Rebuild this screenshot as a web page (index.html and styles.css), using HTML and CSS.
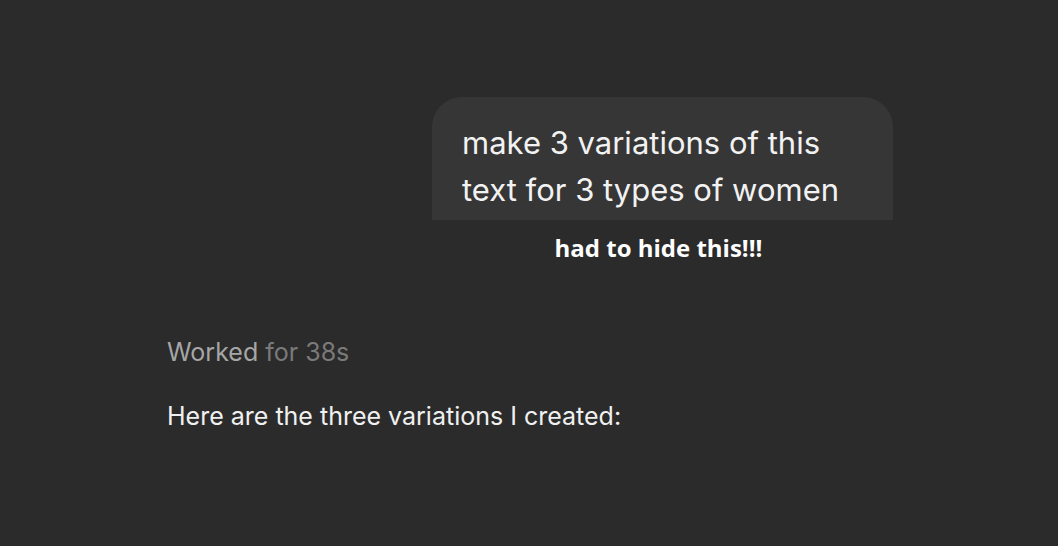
FILE: index.html
```html
<!DOCTYPE html>
<html>
<head>
<meta charset="utf-8">
<link rel="stylesheet" href="styles.css">
</head>
<body>
<div class="page">
  <div class="user-row">
    <div class="user-col">
      <div class="bubble">make 3 variations of this<br>text for 3 types of women</div>
      <div class="note">had to hide this!!!</div>
    </div>
  </div>
  <div class="assistant">
    <div class="worked"><span class="w1">Worked</span> <span class="w2">for 38s</span></div>
    <div class="reply">Here are the three variations I created:</div>
  </div>
</div>
</body>
</html>
```
FILE: styles.css
```css
html, body {
  margin: 0;
  padding: 0;
  background: #2b2b2b;
}
body {
  width: 1058px;
  height: 546px;
  overflow: hidden;
  font-family: Inter, "Liberation Sans", sans-serif;
}
.page {
  display: flex;
  flex-direction: column;
  padding-top: 97px;
}
.user-row {
  display: flex;
  justify-content: flex-start;
  padding-left: 432px;
}
.user-col {
  display: flex;
  flex-direction: column;
  width: 461px;
}
.bubble {
  background: #363636;
  border-radius: 30px 30px 0 0;
  color: #f2f2f2;
  font-size: 31px;
  line-height: 47px;
  padding: 22px 30px 0 30px;
  box-sizing: border-box;
  height: 123px;
  white-space: nowrap;
}
.note {
  font-family: "Open Sans", sans-serif;
  font-weight: 700;
  font-size: 24px;
  color: #ffffff;
  text-align: center;
  margin-top: 12px;
  line-height: 32px;
  padding-right: 8px;
}
.assistant {
  padding-left: 167px;
  margin-top: 73px;
}
.worked {
  font-size: 25px;
  line-height: 30px;
}
.w1 { color: #a6a6a6; }
.w2 { color: #7a7a7a; }
.reply {
  margin-top: 34px;
  font-size: 25px;
  line-height: 30px;
  color: #f0f0f0;
}
```
